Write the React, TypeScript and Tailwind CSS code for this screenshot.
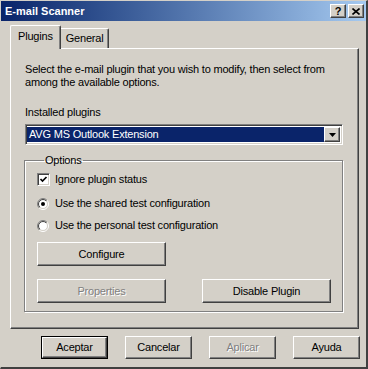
import React, { useId } from 'react';

const font = "font-['Liberation_Sans',Arial,sans-serif]";

// raised 3D edge, Windows 2000 style
const raised =
  'border-t border-l border-t-white border-l-white border-r border-b border-r-[#404040] border-b-[#404040] shadow-[inset_-1px_-1px_0_#808080]';

function WinButton({
  label,
  width,
  disabled,
  isDefault,
}: {
  label: string;
  width: string;
  disabled?: boolean;
  isDefault?: boolean;
}) {
  const inner = (
    <div
      className={`flex items-center justify-center h-full bg-[#d4d0c8] ${raised} ${
        disabled ? 'text-[#808080] [text-shadow:1px_1px_0_#fff]' : 'text-black'
      }`}
    >
      {label}
    </div>
  );
  if (isDefault) {
    return <div className={`${width} h-[23px] border border-black`}>{inner}</div>;
  }
  return <div className={`${width} h-[23px]`}>{inner}</div>;
}

function Radio({ checked }: { checked?: boolean }) {
  const id = useId().replace(/:/g, '');
  return (
    <svg width="12" height="12" viewBox="0 0 12 12" className="shrink-0">
      <defs>
        <linearGradient id={`o${id}`} x1="0" y1="0" x2="1" y2="1">
          <stop offset="0.5" stopColor="#808080" />
          <stop offset="0.5" stopColor="#ffffff" />
        </linearGradient>
        <linearGradient id={`i${id}`} x1="0" y1="0" x2="1" y2="1">
          <stop offset="0.5" stopColor="#404040" />
          <stop offset="0.5" stopColor="#d4d0c8" />
        </linearGradient>
      </defs>
      <circle cx="6" cy="6" r="5.5" fill="none" stroke={`url(#o${id})`} strokeWidth="1" />
      <circle cx="6" cy="6" r="4.5" fill="#fff" stroke={`url(#i${id})`} strokeWidth="1" />
      {checked && <circle cx="6" cy="6" r="2" fill="#000" />}
    </svg>
  );
}

function Checkbox({ checked }: { checked?: boolean }) {
  return (
    <div className="w-[13px] h-[13px] shrink-0 bg-white border-t border-l border-t-[#808080] border-l-[#808080] border-r border-b border-r-white border-b-white shadow-[inset_1px_1px_0_#404040,inset_-1px_-1px_0_#d4d0c8]">
      {checked && (
        <svg width="11" height="11" viewBox="0 0 11 11">
          <path d="M2.5 5 L4.5 7 L8.5 3" fill="none" stroke="#000" strokeWidth="1.7" />
        </svg>
      )}
    </div>
  );
}

export default function App() {
  return (
    <div
      className={`${font} text-[11px] leading-[13px] tracking-[-0.2px] w-[368px] h-[369px] bg-[#d4d0c8] flex flex-col border-t border-l border-t-[#d4d0c8] border-l-[#d4d0c8] border-r-2 border-b-2 border-r-[#404040] border-b-[#404040] overflow-hidden select-none`}
    >
      {/* Title bar */}
      <div className="h-[20px] shrink-0 flex items-center justify-between bg-gradient-to-r from-[#0a246a] to-[#a6caf0] pl-[4px] pr-[2px]">
        <span className="text-white font-bold text-[11px] tracking-normal">E-mail Scanner</span>
        <div className="flex items-center gap-[2px]">
          <div className={`w-[16px] h-[14px] bg-[#d4d0c8] ${raised} flex items-center justify-center font-bold text-[11px] leading-none text-black`}>
            ?
          </div>
          <div className={`w-[16px] h-[14px] bg-[#d4d0c8] ${raised} flex items-center justify-center`}>
            <svg width="8" height="7" viewBox="0 0 8 7">
              <path d="M0.5 0.5 L7.5 6.5 M7.5 0.5 L0.5 6.5" stroke="#000" strokeWidth="1.6" />
            </svg>
          </div>
        </div>
      </div>

      {/* Tabs */}
      <div className="flex items-end mt-[4px] ml-[9px] h-[23px] shrink-0">
        <div className="relative z-10 -mb-px h-[24px] px-[7px] pt-[4px] bg-[#d4d0c8] border-t border-l border-t-white border-l-white border-r border-r-[#404040] rounded-tl-[2px] rounded-tr-[2px] shadow-[inset_-1px_0_0_#808080]">
          Plugins
        </div>
        <div className="h-[20px] px-[5px] pt-[3px] bg-[#d4d0c8] border-t border-t-white border-r border-r-[#404040] rounded-tr-[2px] shadow-[inset_-1px_0_0_#808080]">
          General
        </div>
      </div>

      {/* Panel */}
      <div className={`ml-[9px] w-[349px] h-[281px] shrink-0 bg-[#d4d0c8] ${raised} pt-[14px] pl-[14px]`}>
        <p>
          Select the e-mail plugin that you wish to modify, then select from
          <br />
          among the available options.
        </p>

        <p className="mt-[17px]">Installed plugins</p>

        <div className="mt-[5px] w-[318px] h-[21px] flex bg-white border-t border-l border-t-[#808080] border-l-[#808080] border-r border-b border-r-white border-b-white shadow-[inset_1px_1px_0_#404040,inset_-1px_-1px_0_#d4d0c8] p-[2px] pl-[1px]">
          <div className="flex-1 bg-[#0a246a] text-white pl-[2px] flex items-center">
            AVG MS Outlook Extension
          </div>
          <div className={`w-[16px] bg-[#d4d0c8] ${raised} flex items-center justify-center`}>
            <svg width="7" height="4" viewBox="0 0 7 4">
              <path d="M0 0 H7 L3.5 4 Z" fill="#000" />
            </svg>
          </div>
        </div>

        <fieldset className="mt-[9px] -ml-px w-[319px] border border-[#808080] shadow-[1px_1px_0_#fff,inset_1px_1px_0_#fff] pl-[12px] pb-[8px]">
          <legend className="ml-[7px] px-[1px]">Options</legend>

          <div className="mt-[6px] flex items-center gap-[5px] h-[13px]">
            <Checkbox checked />
            <span>Ignore plugin status</span>
          </div>
          <div className="mt-[11px] flex items-center gap-[6px] h-[13px]">
            <Radio checked />
            <span>Use the shared test configuration</span>
          </div>
          <div className="mt-[9px] flex items-center gap-[6px] h-[13px]">
            <Radio />
            <span>Use the personal test configuration</span>
          </div>

          <div className="mt-[10px]">
            <div className={`w-[129px] h-[24px] bg-[#d4d0c8] ${raised} flex items-center justify-center`}>
              Configure
            </div>
          </div>

          <div className="mt-[13px] flex gap-[36px]">
            <div className={`w-[129px] h-[24px] bg-[#d4d0c8] ${raised} flex items-center justify-center text-[#808080] [text-shadow:1px_1px_0_#fff]`}>
              Properties
            </div>
            <div className={`w-[129px] h-[24px] bg-[#d4d0c8] ${raised} flex items-center justify-center`}>
              Disable Plugin
            </div>
          </div>
        </fieldset>
      </div>

      {/* Dialog buttons */}
      <div className="mt-[7px] pl-[40px] flex gap-[17px]">
        <WinButton label="Aceptar" width="w-[67px]" isDefault />
        <WinButton label="Cancelar" width="w-[67px]" />
        <WinButton label="Aplicar" width="w-[67px]" disabled />
        <WinButton label="Ayuda" width="w-[67px]" />
      </div>
    </div>
  );
}
